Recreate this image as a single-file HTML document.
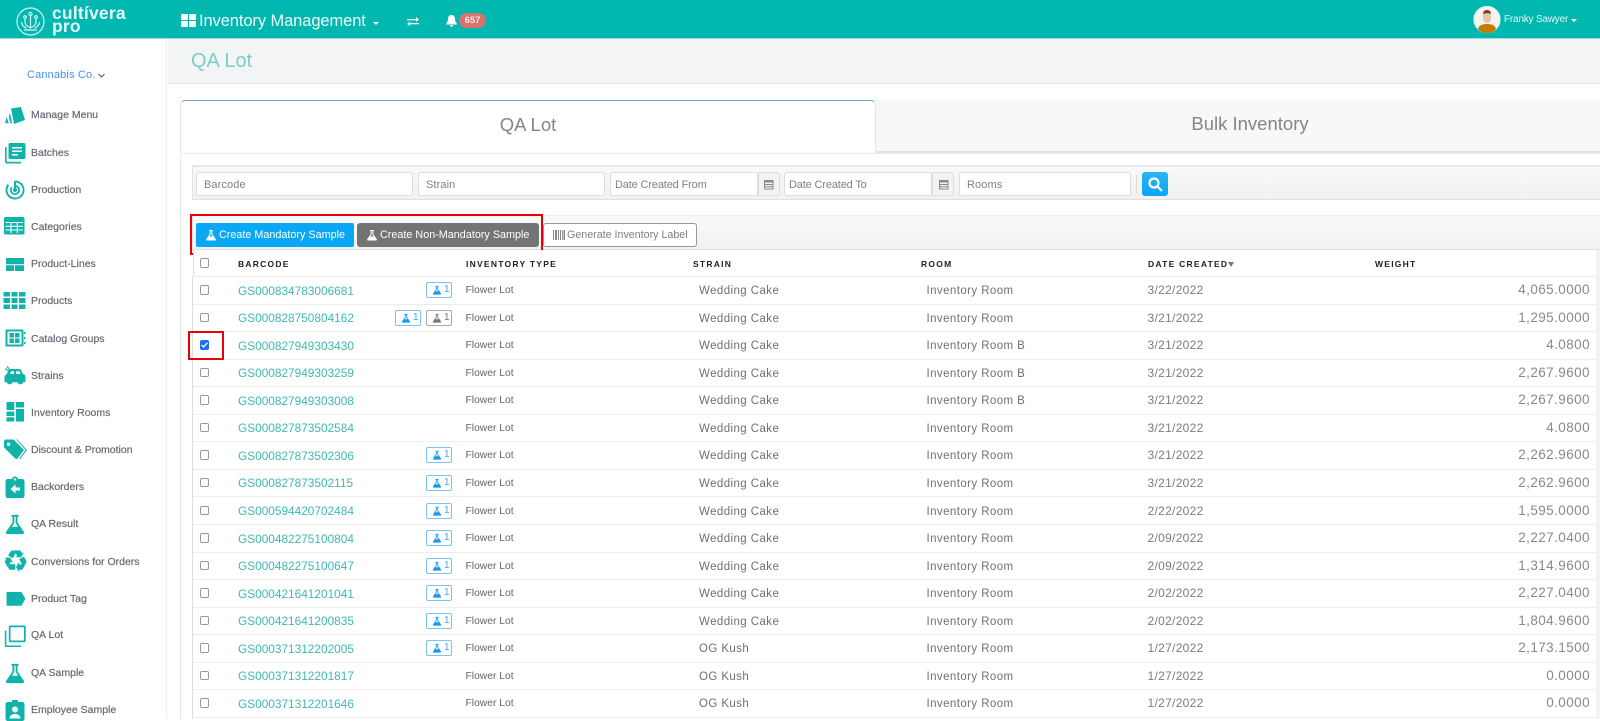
<!DOCTYPE html>
<html>
<head>
<meta charset="utf-8">
<title>QA Lot</title>
<style>
*{box-sizing:border-box}
html,body{margin:0;padding:0;width:1600px;height:719px;overflow:hidden;background:#fff;font-family:"Liberation Sans",sans-serif}
.abs,.top *{position:absolute}
.top{position:absolute;left:0;top:0;width:1600px;height:39px;background:#00b8b0;border-bottom:1px solid #9fdcd8;color:#fff}
.side{position:absolute;left:0;top:39px;width:167px;height:680px;background:#fff;border-right:1px solid #eceef0}
.si{position:absolute;left:31px;font-size:10.5px;line-height:14px;color:#666a72;white-space:nowrap;font-weight:400;-webkit-text-stroke:.2px #666a72}
.ic{position:absolute;left:4px;width:22px;height:22px;fill:#0fb3aa}
.head{position:absolute;left:168px;top:39px;width:1432px;height:45px;background:#f3f4f6;border-bottom:1px solid #e6e7e9}
.head span{position:absolute;left:23px;top:8px;font-size:20px;line-height:28px;color:#7ccdc9;letter-spacing:0}
.tab{position:absolute;top:100px;height:53px;text-align:center;font-size:18.5px;line-height:47px;color:#858585}
.t1{left:180px;width:696px;background:#fff;border:1px solid #e4e4e4;border-top:1px solid #6ea4d8;border-bottom:0;border-radius:5px 5px 0 0}
.t2{left:876px;width:724px;background:#f8f8f8;border-bottom:2px solid #e2e2e2;padding-left:24px}
.panel{position:absolute;left:180px;top:153px;width:1420px;height:566px;border-left:1px solid #e4e4e4;border-top:1px solid #e8e8e8;border-radius:4px 0 0 0;background:#fff}
.bar{position:absolute;left:192px;width:1408px;background:linear-gradient(#f9f9f9,#f1f1f1)}
.inp{position:absolute;background:#fff;border:1px solid #ddd;border-radius:3px;font-size:11px;color:#808080;line-height:24px;padding-left:7px;letter-spacing:.1px;white-space:nowrap;overflow:hidden}
.add{position:absolute;top:172px;height:24px;width:22px;background:#f3f3f3;border:1px solid #ddd;border-radius:0 3px 3px 0}
.btn{position:absolute;top:223px;height:24px;border-radius:2px;font-size:10.8px;line-height:24px;color:#fff;white-space:nowrap}
.btn svg{position:absolute;left:9px;top:6px;width:12px;height:12px;fill:#fff}
.btn span{position:absolute;left:23px;top:0}
.red{position:absolute;border:2.5px solid #e8000b;pointer-events:none}
.h{position:absolute;top:258px;font-size:8.5px;line-height:12px;font-weight:700;letter-spacing:1.25px;color:#222;white-space:nowrap}
.c{position:absolute;left:6.5px;top:8px;width:9.5px;height:9.5px;border:1px solid #999;border-radius:2px;background:#fff}
.r{position:absolute;left:193px;width:1403px;height:27.56px;border-bottom:1.5px solid #ededed;font-size:11px;line-height:26px;color:#666;white-space:nowrap}
.r>*{position:absolute}
.r a{left:45px;font-size:11.85px;color:#3fb9b1;top:.5px}
.r .t{left:272.5px;font-size:10.3px;color:#6a5f6a;top:1px}
.r .s{left:506px;font-size:11.5px;letter-spacing:.42px;top:1px;color:#707070}
.r .m{left:733.5px;font-size:11.5px;letter-spacing:.42px;top:1px;color:#707070}
.r .d{left:954.5px;font-size:12px;letter-spacing:.3px;top:0;color:#7c7c7c}
.r .w{right:6px;font-size:13.5px;letter-spacing:.42px;top:0;color:#858a90}
.b{top:5px;width:26px;height:16px;border:1px solid #7cc3f5;border-radius:2px;font-size:10px;line-height:14px;color:#49a5e6;font-weight:400}
.b svg{position:absolute;left:5px;top:2px;width:10px;height:10px;fill:#1699ea}
.b em{position:absolute;left:17px;top:0;font-style:normal}
.b.g{border-color:#aaa;color:#777}.b.g svg{fill:#777}
.b1{left:233px}.b0{left:202px}
</style>
</head>
<body>
<svg width="0" height="0" style="position:absolute">
<symbol id="fl" viewBox="0 0 24 24"><path d="M8 2h8v2h-1.3v6.2L21.6 20.500c.8 1.400-.1 2.500-1.500 2.500H3.900c-1.400 0-2.300-1.100-1.500-2.500L9.300 10.200V4H8zM11.300 4v6.800L8.600 15h6.800l-2.700-4.200V4z"/></symbol>
</svg>

<div class="top">
 <svg style="left:16px;top:7px;width:29px;height:29px" viewBox="0 0 29 29" fill="none" stroke="#d8f3f1" stroke-width="1.200"><circle cx="14.500" cy="14.500" r="13.500"/><path d="M14.500 9v12M9 12v3c0 3 2 4 5.500 6M20 12v3c0 3-2 4-5.500 6M5.500 15c0 3 2.500 5 5 6.500M23.500 15c0 3-2.500 5-5 6.500M8 23h13" /><circle cx="14.500" cy="7" r="1.500"/><circle cx="9" cy="10" r="1.300"/><circle cx="20" cy="10" r="1.300"/></svg>
 <div style="left:52px;top:4px;font-size:17.500px;line-height:19px;font-weight:700;letter-spacing:.2px;white-space:nowrap;color:#eafafa">cultívera</div>
 <div style="left:52px;top:17px;font-size:17.500px;line-height:19px;font-weight:700;letter-spacing:.2px;color:#eafafa">pro</div>
 <svg style="left:181px;top:14px;width:15px;height:13px" viewBox="0 0 15 13" fill="#fff"><rect width="7" height="6" rx="1"/><rect x="8" width="7" height="6" rx="1"/><rect y="7" width="7" height="6" rx="1"/><rect x="8" y="7" width="7" height="6" rx="1"/></svg>
 <div style="left:199px;top:10px;font-size:16.500px;line-height:22px;white-space:nowrap;color:#eefafa;letter-spacing:-.1px">Inventory Management</div>
 <div style="left:373px;top:22px;width:0;height:0;border:3.500px solid transparent;border-top:3.500px solid #fff"></div>
 <svg style="left:407px;top:17px;width:12px;height:9px" viewBox="0 0 12 9" fill="#fff"><path d="M0 2h9V0l3 2.500L9 5V3.200H0zM12 6H3V4.500L0 7l3 2V7.200h9z"/></svg>
 <svg style="left:446px;top:15px;width:11px;height:12px" viewBox="0 0 11 12" fill="#fff"><path d="M5.500 0C3 0 2 2 2 4c0 3-2 4-2 5.500h11C11 8 9 7 9 4 9 2 8 0 5.500 0zM4 10.300h3c0 2-3 2-3 0z"/></svg>
 <div style="left:459px;top:13px;width:27px;height:15px;border-radius:8px;background:#d7726c;font-size:9.500px;line-height:15px;text-align:center;font-weight:700;color:#fbe9e7">657</div>
 <svg style="left:1473px;top:5px;width:28px;height:29px" viewBox="0 0 28 29"><circle cx="14" cy="14.500" r="13" fill="#f5f5f0" stroke="#dff5f3" stroke-width="1.200"/><path d="M5 24c1-4 5-5 9-5s8 1 9 5c-2.500 3-5.500 4-9 4s-6.500-1-9-4z" fill="#c57a00"/><rect x="10" y="6" width="8" height="12" rx="4" fill="#e8c4a8"/><path d="M10 9c0-3 2-4 4-4s4 1 4 4c-2-1-6-1-8 0z" fill="#6e4630"/></svg>
 <div style="left:1504px;top:12px;font-size:10px;line-height:15px;white-space:nowrap;color:#e6f8f7;letter-spacing:-.2px">Franky Sawyer</div>
 <div style="left:1571px;top:19px;width:0;height:0;border:3.500px solid transparent;border-top:3px solid #fff"></div>
</div>

<div class="side"></div>
<div class="abs" style="left:27px;top:67px;font-size:11px;line-height:16px;color:#4a8ff0;white-space:nowrap;letter-spacing:.15px">Cannabis Co.</div>
<svg class="abs" style="left:98px;top:73px;width:7px;height:5px" viewBox="0 0 7 5" fill="none" stroke="#555" stroke-width="1"><path d="M.5 1l3 3 3-3"/></svg>

<svg class="ic" style="top:104px" viewBox="0 0 22 22"><path d="M7 4.500L17 3l4 13-11 4z"/><path d="M5.800 8.500L8 19l-1.500.5-1.700-6zM2.800 13L4.800 19.500 1 19z"/></svg>
<svg class="ic" style="top:142px" viewBox="0 0 22 22"><path d="M6 1h14c.8 0 1.500.7 1.500 1.500v13c0 .8-.7 1.500-1.500 1.500H6c-.8 0-1.500-.7-1.500-1.500v-13C4.500 1.700 5.200 1 6 1zm2 4v1.500h10V5zm0 3.500V10h10V8.500zm0 3.500v1.500h6V12z"/><path d="M1 5h1.600v14.800H17v1.700H2.500C1.700 21.500 1 20.800 1 20z"/></svg>
<svg class="ic" style="top:179px" viewBox="0 0 22 22"><path d="M11 1.500a9.500 9.500 0 1 1-9.500 9.500c0-2.300.8-4.400 2.200-6l1.400 1.300A7.600 7.600 0 1 0 11 3.400z"/><path d="M11 6a5 5 0 1 1-5 5c0-1.300.4-2.400 1.200-3.300l1.300 1.200A3.200 3.200 0 1 0 11 7.800z"/><path d="M10 2h2v9h-2z"/><circle cx="11" cy="11" r="2"/></svg>
<svg class="ic" style="top:216px;left:3px" viewBox="0 0 22 22"><rect x="1" y="1" width="20.500" height="17.500" rx="1.500"/><path d="M2.500 6.500h17.500M2.500 10.300h17.500M2.500 14h17.500M8 6.500V17M14.300 6.500V17" stroke="#fff" stroke-width="1.100" fill="none"/></svg>
<svg class="ic" style="top:252px" viewBox="0 0 22 22"><path d="M2 6h18v6.200H2zM2 13.200h8V19H2zM11 13.200h9V19h-9z"/></svg>
<svg class="ic" style="top:289px;left:3px;width:23px" viewBox="0 0 23 22"><path d="M.5 3h6.500v4.500H.5zM8.500 3h6v4.500h-6zM16 3h6.500v4.500H16zM.5 9h6.500v5H.5zM8.500 9h6v5h-6zM16 9h6.500v5H16zM.5 15.500h6.500V20H.5zM8.500 15.500h6V20h-6zM16 15.500h6.500V20H16z"/></svg>
<svg class="ic" style="top:327px" viewBox="0 0 22 22"><path fill-rule="evenodd" d="M2.500 2.500h16c.6 0 1 .4 1 1v15c0 .6-.4 1-1 1h-16c-.6 0-1-.4-1-1v-15c0-.6.4-1 1-1zM3.500 4.500v13h14v-13z"/><path d="M5.500 6h4.500v4.500H5.500zM11 6h4.500v4.500H11zM5.500 11.500h4.500V16H5.500zM11 11.500h4.500V16H11zM20 5h1.500v2H20zM20 10h1.500v2H20zM20 15h1.500v2H20z"/></svg>
<svg class="ic" style="top:365px" viewBox="0 0 22 22"><path d="M6 4h9c1 0 2 .6 2.500 2L19 9c1.700.5 2.500 1.600 2.500 3v4c0 .8-.5 1.300-1.300 1.300h-1a3 3 0 0 1-5.700 0H8.500a3 3 0 0 1-5.700 0h-1C1 17.300.5 16.800.5 16v-4c0-1.500 1-2.500 2.500-3l1-3.500C4.300 4.600 5 4 6 4zm1 2.200L6 9h4V6.200zm5 0V9h4.500l-1-2.800z"/><circle cx="5.700" cy="17" r="1.700"/><circle cx="16.300" cy="17" r="1.700"/><path d="M2 3l2 2-1 1-2-2zM3.500 1l2 2.500-1 .8-2-2.500z"/></svg>
<svg class="ic" style="top:401px" viewBox="0 0 22 22"><path d="M2.500 1h7.800v8H2.500zM12 1h8v5.500h-8zM12 8h8v12.500h-8zM2.500 10.500h7.800V15H2.500zM2.500 16.300h7.800v4.200H2.500z"/></svg>
<svg class="ic" style="top:438px;left:3px;width:24px" viewBox="0 0 24 22"><path fill-rule="evenodd" d="M1 3.500C1 2.500 1.700 1.500 3 1.500h7.500L21 12l-6.500 8.500c-.6.700-1.500.7-2 .2L1.500 10C1 9.500 1 9 1 8.500zM5.500 4.500a1.700 1.700 0 1 0 0 3.400 1.700 1.700 0 0 0 0-3.400z"/><path d="M13 1.500h1L24 12l-6.800 9H16l6.500-9z"/></svg>
<svg class="ic" style="top:476px" viewBox="0 0 22 22"><path fill-rule="evenodd" d="M4 3h4c.3-1.500 1.500-2.500 3-2.500S13.700 1.500 14 3h4c1.500 0 2.500 1 2.500 2.500v14c0 1.500-1 2.500-2.500 2.500H4c-1.500 0-2.500-1-2.500-2.500v-14C1.500 4 2.500 3 4 3zm7-.8a1.200 1.200 0 1 0 0 2.400 1.200 1.200 0 0 0 0-2.400zM11.500 8.500L6.500 13l5 4.500v-3h4.500v-3h-4.500z"/></svg>
<svg class="ic" style="top:513px" viewBox="0 0 24 24"><use href="#fl"/></svg>
<div class="abs" style="left:2.500px;top:545px;font-size:29px;line-height:32px;color:#0fb3aa;font-family:'DejaVu Sans',sans-serif;width:26px;text-align:center;-webkit-text-stroke:.5px #0fb3aa">♻</div>
<svg class="ic" style="top:588px" viewBox="0 0 22 22"><path d="M3.500 4h13c.6 0 1 .2 1.400.7l3.100 5.300c.3.500.3 1 0 1.500l-3.100 5.500c-.4.600-.8.800-1.400.8H3.500c-.7 0-1-.3-1-1V5c0-.7.300-1 1-1z"/></svg>
<svg class="ic" style="top:625px;left:3.500px" viewBox="0 0 22 22"><path fill-rule="evenodd" d="M6 .5h14.500c.8 0 1.200.4 1.200 1.200V16c0 .8-.4 1.200-1.200 1.200H6c-.8 0-1.200-.4-1.200-1.200V1.700C4.800.9 5.200.5 6 .5zM6.500 2.200v13.300h13.500V2.200z"/><path d="M.8 5.500h1.600v15h14.500v1.500H2c-.8 0-1.200-.4-1.200-1.200z"/></svg>
<svg class="ic" style="top:662px" viewBox="0 0 24 24"><use href="#fl"/></svg>
<svg class="ic" style="top:699px" viewBox="0 0 22 22"><path fill-rule="evenodd" d="M4 3h4V1h6v2h4c1.500 0 2.500 1 2.500 2.500v14c0 1.500-1 2.500-2.500 2.500H4c-1.500 0-2.500-1-2.500-2.500v-14C1.500 4 2.500 3 4 3zm7 4.500a3 3 0 1 0 0 6 3 3 0 0 0 0-6zM5.500 19.500h11c0-3-2.500-4.500-5.500-4.500s-5.500 1.500-5.500 4.500z"/></svg>

<div class="si" style="top:108px">Manage Menu</div>
<div class="si" style="top:146px">Batches</div>
<div class="si" style="top:183px">Production</div>
<div class="si" style="top:220px">Categories</div>
<div class="si" style="top:257px">Product-Lines</div>
<div class="si" style="top:294px">Products</div>
<div class="si" style="top:332px">Catalog Groups</div>
<div class="si" style="top:369px">Strains</div>
<div class="si" style="top:406px">Inventory Rooms</div>
<div class="si" style="top:443px">Discount &amp; Promotion</div>
<div class="si" style="top:480px">Backorders</div>
<div class="si" style="top:517px">QA Result</div>
<div class="si" style="top:555px">Conversions for Orders</div>
<div class="si" style="top:592px">Product Tag</div>
<div class="si" style="top:628px">QA Lot</div>
<div class="si" style="top:666px">QA Sample</div>
<div class="si" style="top:703px">Employee Sample</div>

<div class="head"><span>QA Lot</span></div>
<div class="panel"></div>
<div class="tab t1">QA Lot</div>
<div class="tab t2">Bulk Inventory</div>

<div class="bar" style="top:165px;height:35px;border-top:2px solid #e8e8e8;border-bottom:1px solid #e0e0e0;border-left:1px solid #e4e4e4"></div>
<div class="inp" style="left:196px;top:172px;width:217px;height:24px">Barcode</div>
<div class="inp" style="left:418px;top:172px;width:187px;height:24px">Strain</div>
<div class="inp" style="left:610px;top:172px;width:148px;height:24px;padding-left:4px;letter-spacing:-.15px">Date Created From</div>
<div class="add" style="left:758px"></div>
<div class="inp" style="left:784px;top:172px;width:148px;height:24px;padding-left:4px;letter-spacing:-.15px">Date Created To</div>
<div class="add" style="left:932px"></div>
<svg class="abs" style="left:763px;top:179px;width:11px;height:11px" viewBox="0 0 11 11" fill="#888"><path fill-rule="evenodd" d="M1 1h9.500v9.500H1zM2 3.500V5h7.500V3.500zM2 6v1.200h7.500V6zm0 2.200v1.300h7.500V8.200z"/></svg>
<svg class="abs" style="left:938px;top:179px;width:11px;height:11px" viewBox="0 0 11 11" fill="#888"><path fill-rule="evenodd" d="M1 1h9.500v9.500H1zM2 3.500V5h7.500V3.500zM2 6v1.200h7.500V6zm0 2.200v1.300h7.500V8.200z"/></svg>
<div class="inp" style="left:959px;top:172px;width:172px;height:24px">Rooms</div>
<div class="abs" style="left:1136px;top:175px;width:1px;height:18px;background:#ddd"></div>
<div class="abs" style="left:1142px;top:172px;width:26px;height:24px;border-radius:3px;background:linear-gradient(#29b4f6,#0aa6f5)"></div>
<svg class="abs" style="left:1147px;top:176px;width:16px;height:16px" viewBox="0 0 16 16" fill="none" stroke="#fff" stroke-width="2.200"><circle cx="7" cy="7" r="4.500"/><path d="M10.500 10.500L15 15"/></svg>

<div class="bar" style="top:215px;height:35px;border-top:1px solid #ececec;border-bottom:1px solid #e0e0e0;border-left:1px solid #e4e4e4"></div>
<div class="btn" style="left:196px;width:158px;background:#0aa7f5"><svg viewBox="0 0 24 24"><use href="#fl"/></svg><span>Create Mandatory Sample</span></div>
<div class="btn" style="left:357px;width:182px;background:#747474;border-radius:3px"><svg viewBox="0 0 24 24"><use href="#fl"/></svg><span>Create Non-Mandatory Sample</span></div>
<div class="btn" style="left:543px;width:154px;background:#fff;border:1px solid #999;border-radius:3px;color:#808080;line-height:22px;font-size:10.700px"><svg style="left:9px;top:5px;fill:#888" viewBox="0 0 12 12"><path d="M0 1h1v10H0zM2 1h2v10H2zM5 1h1v10H5zM7 1h1v10H7zM9 1h.8v10H9zM10.500 1h1.500v10h-1.500z"/></svg><span style="left:23px">Generate Inventory Label</span></div>
<div class="red" style="left:190px;top:214px;width:353px;height:41px"></div>

<div class="abs" style="left:193px;top:250px;width:1403px;height:27px;background:#fff;border-bottom:1.500px solid #ededed;border-left:1px solid #ddd"></div>
<div class="abs" style="left:192px;top:277px;width:1px;height:442px;background:#ddd"></div>
<div class="abs" style="left:199.500px;top:258px;width:9.500px;height:9.500px;border:1px solid #999;border-radius:2px;background:#fff"></div>
<div class="h" style="left:238px">BARCODE</div>
<div class="h" style="left:466px">INVENTORY TYPE</div>
<div class="h" style="left:693px">STRAIN</div>
<div class="h" style="left:921px">ROOM</div>
<div class="h" style="left:1148px">DATE CREATED</div>
<div class="abs" style="left:1228px;top:262px;width:0;height:0;border:3px solid transparent;border-top:5px solid #777"></div>
<div class="h" style="left:1375px">WEIGHT</div>
<div class="abs" style="left:1596px;top:250px;width:4px;height:469px;background:#f3f3f3"></div>

<div class="r" style="top:277px"><i class="c"></i><a>GS000834783006681</a><b class="b b1"><svg viewBox="0 0 24 24"><use href="#fl"/></svg><em>1</em></b><span class="t">Flower Lot</span><span class="s">Wedding Cake</span><span class="m">Inventory Room</span><span class="d">3/22/2022</span><span class="w">4,065.0000</span></div>
<div class="r" style="top:304.600px"><i class="c"></i><a>GS000828750804162</a><b class="b b0"><svg viewBox="0 0 24 24"><use href="#fl"/></svg><em>1</em></b><b class="b b1 g"><svg viewBox="0 0 24 24"><use href="#fl"/></svg><em>1</em></b><span class="t">Flower Lot</span><span class="s">Wedding Cake</span><span class="m">Inventory Room</span><span class="d">3/21/2022</span><span class="w">1,295.0000</span></div>
<div class="r" style="top:332.100px"><i class="c" style="background:#1b6ef3;border-color:#1b6ef3"></i><svg style="left:8px;top:10px;width:7px;height:6px" viewBox="0 0 8 7" fill="none" stroke="#fff" stroke-width="1.500"><path d="M.5 3.500l2.300 2.300L7.500.8"/></svg><a>GS000827949303430</a><span class="t">Flower Lot</span><span class="s">Wedding Cake</span><span class="m">Inventory Room B</span><span class="d">3/21/2022</span><span class="w">4.0800</span></div>
<div class="r" style="top:359.700px"><i class="c"></i><a>GS000827949303259</a><span class="t">Flower Lot</span><span class="s">Wedding Cake</span><span class="m">Inventory Room B</span><span class="d">3/21/2022</span><span class="w">2,267.9600</span></div>
<div class="r" style="top:387.200px"><i class="c"></i><a>GS000827949303008</a><span class="t">Flower Lot</span><span class="s">Wedding Cake</span><span class="m">Inventory Room B</span><span class="d">3/21/2022</span><span class="w">2,267.9600</span></div>
<div class="r" style="top:414.800px"><i class="c"></i><a>GS000827873502584</a><span class="t">Flower Lot</span><span class="s">Wedding Cake</span><span class="m">Inventory Room</span><span class="d">3/21/2022</span><span class="w">4.0800</span></div>
<div class="r" style="top:442.400px"><i class="c"></i><a>GS000827873502306</a><b class="b b1"><svg viewBox="0 0 24 24"><use href="#fl"/></svg><em>1</em></b><span class="t">Flower Lot</span><span class="s">Wedding Cake</span><span class="m">Inventory Room</span><span class="d">3/21/2022</span><span class="w">2,262.9600</span></div>
<div class="r" style="top:469.900px"><i class="c"></i><a>GS000827873502115</a><b class="b b1"><svg viewBox="0 0 24 24"><use href="#fl"/></svg><em>1</em></b><span class="t">Flower Lot</span><span class="s">Wedding Cake</span><span class="m">Inventory Room</span><span class="d">3/21/2022</span><span class="w">2,262.9600</span></div>
<div class="r" style="top:497.500px"><i class="c"></i><a>GS000594420702484</a><b class="b b1"><svg viewBox="0 0 24 24"><use href="#fl"/></svg><em>1</em></b><span class="t">Flower Lot</span><span class="s">Wedding Cake</span><span class="m">Inventory Room</span><span class="d">2/22/2022</span><span class="w">1,595.0000</span></div>
<div class="r" style="top:525px"><i class="c"></i><a>GS000482275100804</a><b class="b b1"><svg viewBox="0 0 24 24"><use href="#fl"/></svg><em>1</em></b><span class="t">Flower Lot</span><span class="s">Wedding Cake</span><span class="m">Inventory Room</span><span class="d">2/09/2022</span><span class="w">2,227.0400</span></div>
<div class="r" style="top:552.600px"><i class="c"></i><a>GS000482275100647</a><b class="b b1"><svg viewBox="0 0 24 24"><use href="#fl"/></svg><em>1</em></b><span class="t">Flower Lot</span><span class="s">Wedding Cake</span><span class="m">Inventory Room</span><span class="d">2/09/2022</span><span class="w">1,314.9600</span></div>
<div class="r" style="top:580.200px"><i class="c"></i><a>GS000421641201041</a><b class="b b1"><svg viewBox="0 0 24 24"><use href="#fl"/></svg><em>1</em></b><span class="t">Flower Lot</span><span class="s">Wedding Cake</span><span class="m">Inventory Room</span><span class="d">2/02/2022</span><span class="w">2,227.0400</span></div>
<div class="r" style="top:607.700px"><i class="c"></i><a>GS000421641200835</a><b class="b b1"><svg viewBox="0 0 24 24"><use href="#fl"/></svg><em>1</em></b><span class="t">Flower Lot</span><span class="s">Wedding Cake</span><span class="m">Inventory Room</span><span class="d">2/02/2022</span><span class="w">1,804.9600</span></div>
<div class="r" style="top:635.300px"><i class="c"></i><a>GS000371312202005</a><b class="b b1"><svg viewBox="0 0 24 24"><use href="#fl"/></svg><em>1</em></b><span class="t">Flower Lot</span><span class="s">OG Kush</span><span class="m">Inventory Room</span><span class="d">1/27/2022</span><span class="w">2,173.1500</span></div>
<div class="r" style="top:662.800px"><i class="c"></i><a>GS000371312201817</a><span class="t">Flower Lot</span><span class="s">OG Kush</span><span class="m">Inventory Room</span><span class="d">1/27/2022</span><span class="w">0.0000</span></div>
<div class="r" style="top:690.400px"><i class="c"></i><a>GS000371312201646</a><span class="t">Flower Lot</span><span class="s">OG Kush</span><span class="m">Inventory Room</span><span class="d">1/27/2022</span><span class="w">0.0000</span></div>

<div class="red" style="left:188px;top:331px;width:36px;height:29px"></div>
</body>
</html>
